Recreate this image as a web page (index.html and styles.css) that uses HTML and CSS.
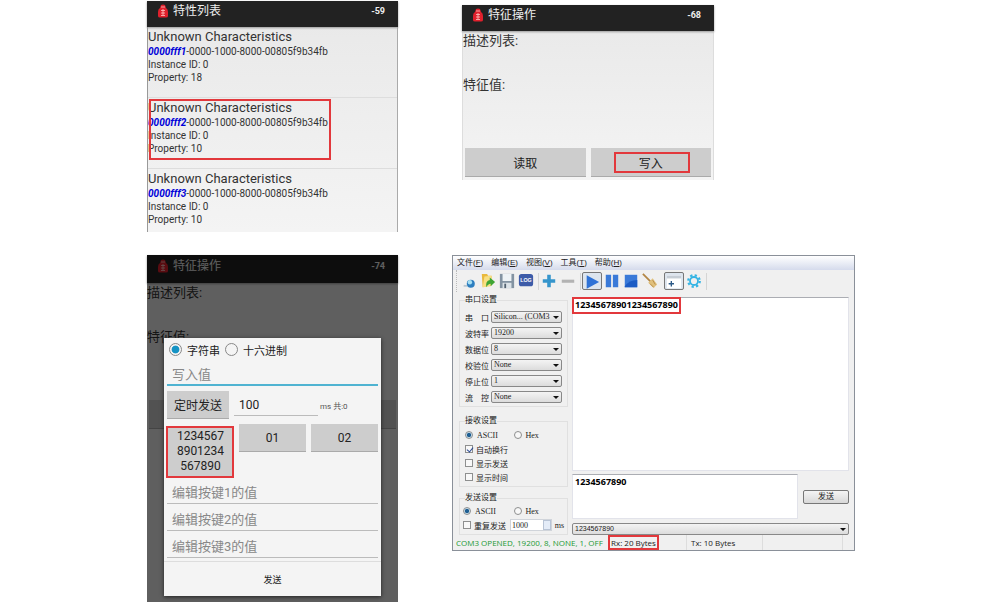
FILE: index.html
```html
<!DOCTYPE html>
<html lang="zh-CN">

<head>
    <meta charset="UTF-8">
    <meta name="viewport" content="width=device-width, initial-scale=1.0">
    <title>特征操作</title>
    <link rel="stylesheet" href="styles.css">
</head>

<body>
    <svg width="0" height="0" class="defs">
        <symbol id="logo" viewBox="0 0 12 14">
            <path d="M4 1Q6 0 8 1L9 4Q11 5 11 8V12Q11 13.500 9 13.500H3Q1 13.500 1 12V8Q1 5 3 4Z" fill="#e0202c" />
            <path d="M4 3H8M4 6.500H8M6 5V11M4 9H8M4 11.500H8" stroke="#ffc5c0" stroke-width="0.800" fill="none" />
        </symbol>
    </svg>

    <div class="page">
        <!-- Characteristics list -->
        <div class="phone">
            <div class="bar">
                <svg class="logo"><use href="#logo" /></svg>
                <span class="bar-title">特性列表</span>
                <span class="rssi">-59</span>
            </div>
            <div class="item">
                <div class="name">Unknown Characteristics</div>
                <div><b class="uuid">0000fff1</b>-0000-1000-8000-00805f9b34fb</div>
                <div>Instance ID: 0</div>
                <div>Property: 18</div>
            </div>
            <div class="item">
                <div class="name">Unknown Characteristics</div>
                <div><b class="uuid">0000fff2</b>-0000-1000-8000-00805f9b34fb</div>
                <div>Instance ID: 0</div>
                <div>Property: 10</div>
                <span class="mark mark-item"></span>
            </div>
            <div class="item">
                <div class="name">Unknown Characteristics</div>
                <div><b class="uuid">0000fff3</b>-0000-1000-8000-00805f9b34fb</div>
                <div>Instance ID: 0</div>
                <div>Property: 10</div>
            </div>
        </div>

        <!-- Read / write -->
        <div class="phone phone-rw">
            <div class="bar">
                <svg class="logo"><use href="#logo" /></svg>
                <span class="bar-title">特征操作</span>
                <span class="rssi">-68</span>
            </div>
            <div class="label">描述列表:</div>
            <div class="label">特征值:</div>
            <div class="actions">
                <button class="btn">读取</button>
                <button class="btn">写入<span class="mark mark-write"></span></button>
            </div>
        </div>

        <!-- Write dialog -->
        <div class="phone phone-dialog">
            <div class="bar">
                <svg class="logo"><use href="#logo" /></svg>
                <span class="bar-title">特征操作</span>
                <span class="rssi">-74</span>
            </div>
            <div class="label">描述列表:</div>
            <div class="label">特征值:</div>
            <div class="actions">
                <button class="btn" aria-label="读取"></button>
                <button class="btn" aria-label="写入"></button>
            </div>
            <div class="shade"></div>
            <div class="dialog">
                <div class="radios">
                    <label><input type="radio" name="fmt" checked>字符串</label>
                    <label><input type="radio" name="fmt">十六进制</label>
                </div>
                <input class="field field-focus" type="text" placeholder="写入值" aria-label="写入值">
                <div class="timer">
                    <button class="btn btn-timer">定时发送</button>
                    <input class="interval" type="text" value="100" aria-label="定时发送">
                    <span class="unit">ms 共:0</span>
                </div>
                <div class="keys">
                    <button class="btn key key-long">1234567<br>8901234<br>567890<span class="mark mark-key"></span></button>
                    <button class="btn key">01</button>
                    <button class="btn key">02</button>
                </div>
                <input class="field" type="text" placeholder="编辑按键1的值" aria-label="编辑按键1的值">
                <input class="field" type="text" placeholder="编辑按键2的值" aria-label="编辑按键2的值">
                <input class="field" type="text" placeholder="编辑按键3的值" aria-label="编辑按键3的值">
                <button class="dialog-send">发送</button>
            </div>
        </div>

        <!-- Serial port tool -->
        <div class="serial">
            <div class="menu">
                <span>文件(<u>F</u>)</span>
                <span>编辑(<u>E</u>)</span>
                <span>视图(<u>V</u>)</span>
                <span>工具(<u>T</u>)</span>
                <span>帮助(<u>H</u>)</span>
            </div>
            <div class="toolbar">
                <button class="tool" aria-label="connect"><svg viewBox="0 0 18 18"><circle cx="11" cy="12" r="4.500" fill="#2e7fc0" /><circle cx="10" cy="10.500" r="2.500" fill="#a9e0f2" /><path d="M3 14Q5 15 7 14" stroke="#b8c6d0" stroke-width="2" fill="none" /></svg></button>
                <button class="tool" aria-label="open"><svg viewBox="0 0 18 18"><path d="M2 1H8L9 3H13V14L3 16Z" fill="#e9b93c" /><path d="M5 4L13 3L12 15L3 16Z" fill="#f8df82" /><path d="M7 16Q6 9 11 8V5L17 10L12 15V12Q9 12 7 16Z" fill="#3fa535" /></svg></button>
                <button class="tool" aria-label="save"><svg viewBox="0 0 18 18"><path d="M1 1H17V17H1Z" fill="#8393a2" /><path d="M4 1H14V9H4Z" fill="#eef3f6" /><path d="M4 11H14V17H4Z" fill="#dce3e8" /><path d="M6 12H8V17H6Z" fill="#526170" /></svg></button>
                <button class="tool" aria-label="log"><svg viewBox="0 0 18 18"><rect x="1" y="1" width="16" height="14" rx="3" fill="#3d5ba8" /><text x="9" y="10" class="log">LOG</text></svg></button>
                <i class="sep"></i>
                <button class="tool" aria-label="add"><svg viewBox="0 0 18 18"><path d="M7 2H11V7H16V11H11V16H7V11H2V7H7Z" fill="#3595cc" /></svg></button>
                <button class="tool" aria-label="remove"><svg viewBox="0 0 18 18"><path d="M2 7.500H16V11H2Z" fill="#b3b3b3" /></svg></button>
                <i class="sep"></i>
                <button class="tool pressed" aria-label="start"><svg viewBox="0 0 18 18"><path d="M3 1.500L17 9L3 16.500Z" fill="#2f72d6" /></svg></button>
                <button class="tool" aria-label="pause"><svg viewBox="0 0 18 18"><path d="M2 2H8V16H2ZM10 2H16V16H10Z" fill="#3a7ad8" /></svg></button>
                <button class="tool" aria-label="stop"><svg viewBox="0 0 18 18"><path d="M2 2H16V16H2Z" fill="#3a7ad8" /><path d="M2 15Q7 8 16 8V16H2Z" fill="#1c5cc4" /></svg></button>
                <button class="tool" aria-label="clear"><svg viewBox="0 0 18 18"><path d="M1 1L10 10" stroke="#b28543" stroke-width="2" /><path d="M7 11L12 6L17 13L13 17Z" fill="#e0c07c" /><path d="M9 12L13 16M12 8L15 13" stroke="#b48a48" /></svg></button>
                <i class="sep sep-none"></i>
                <button class="tool pressed" aria-label="panel"><svg viewBox="0 0 18 18"><path d="M1 2H17V16H1Z" fill="#fff" /><path d="M1 2H17V5H1Z" fill="#c6cdd5" /><path d="M3 11H9M6 8V14" stroke="#2d5b88" stroke-width="1.500" /></svg></button>
                <button class="tool" aria-label="settings"><svg viewBox="0 0 18 18"><circle cx="9" cy="9" r="6.500" fill="none" stroke="#35b4e4" stroke-width="2.500" stroke-dasharray="2.550" /><circle cx="9" cy="9" r="4.500" fill="none" stroke="#35b4e4" stroke-width="2" /></svg></button>
                <i class="sep"></i>
            </div>

            <div class="work">
                <div class="side">
                    <fieldset class="group group-port">
                        <legend>串口设置</legend>
                        <div class="row"><label for="port">串&emsp;口</label><span class="combo"><select id="port"><option>Silicon... (COM3</option></select></span></div>
                        <div class="row"><label for="baud">波特率</label><span class="combo"><select id="baud"><option>19200</option></select></span></div>
                        <div class="row"><label for="data">数据位</label><span class="combo"><select id="data"><option>8</option></select></span></div>
                        <div class="row"><label for="parity">校验位</label><span class="combo"><select id="parity"><option>None</option></select></span></div>
                        <div class="row"><label for="stop">停止位</label><span class="combo"><select id="stop"><option>1</option></select></span></div>
                        <div class="row"><label for="flow">流&emsp;控</label><span class="combo"><select id="flow"><option>None</option></select></span></div>
                    </fieldset>
                    <fieldset class="group group-recv">
                        <legend>接收设置</legend>
                        <div class="opts">
                            <label><input type="radio" name="recv" checked>ASCII</label>
                            <label><input type="radio" name="recv">Hex</label>
                        </div>
                        <label class="check"><input type="checkbox" checked>自动换行</label>
                        <label class="check"><input type="checkbox">显示发送</label>
                        <label class="check"><input type="checkbox">显示时间</label>
                    </fieldset>
                    <fieldset class="group group-send">
                        <legend>发送设置</legend>
                        <div class="opts">
                            <label><input type="radio" name="send" checked>ASCII</label>
                            <label><input type="radio" name="send">Hex</label>
                        </div>
                        <div class="repeat">
                            <label class="check"><input type="checkbox">重复发送</label>
                            <span class="spin"><input type="text" value="1000" aria-label="ms"><i></i></span>
                            <span class="ms">ms</span>
                        </div>
                    </fieldset>
                </div>

                <div class="main">
                    <div class="recv">
                        <textarea class="console" aria-label="接收" readonly>12345678901234567890</textarea>
                        <span class="mark mark-recv"></span>
                    </div>
                    <div class="send">
                        <textarea class="console" aria-label="发送">1234567890</textarea>
                        <button class="send-btn">发送</button>
                    </div>
                    <span class="combo combo-history"><select aria-label="历史"><option>1234567890</option></select></span>
                </div>
            </div>

            <div class="status">
                <span class="opened">COM3 OPENED, 19200, 8, NONE, 1, OFF</span>
                <span class="rx">Rx: 20 Bytes<span class="mark mark-rx"></span></span>
                <span class="tx">Tx: 10 Bytes</span>
                <span class="rest"></span>
            </div>
        </div>
    </div>
</body>

</html>
```
FILE: styles.css
```css
* {
    box-sizing: border-box;
}

body {
    margin: 0;
    background-color: white;
    font-family: Roboto, "Noto Sans CJK SC", sans-serif;
    color: #333;
}

button, input, select, textarea {
    font-family: inherit;
    color: inherit;
    margin: 0;
    padding: 0;
    border: 0;
    border-radius: 0;
    outline: none;
}

.defs {
    position: absolute;
}

.page {
    display: grid;
    grid-template-columns: 251fr 403fr;
    column-gap: 54px;
    row-gap: 23px;
    align-items: start;
    padding: 1px 145px 0 147px;
}

/* Red frames drawn over the controls */
.mark {
    position: absolute;
    border: 2px solid #e2383c;
}

/* Phone screens */
.phone {
    position: relative;
    background-image: linear-gradient(#e8e8e8, #f4f4f4);
    border-left: 1px solid #999;
    border-right: 1px solid #aaa;
}

.bar {
    display: flex;
    align-items: center;
    height: 26px;
    margin: 0 -1px;
    padding: 0 13px 6px 10px;
    background-color: #222;
    color: #eee;
    box-shadow: 0 1px 2px #999;
}

.logo {
    width: 12px;
    height: 14px;
    margin-right: 4px;
}

.bar-title {
    flex: 1;
    font-size: 12px;
    line-height: 20px;
}

.rssi {
    font-size: 9px;
    font-weight: bold;
}

.item {
    position: relative;
    padding: 1px 0 13px;
    border-bottom: 1px solid #ddd;
    font-size: 10px;
    line-height: 13px;
}

.item:last-child {
    padding-bottom: 6px;
    border-bottom: 0;
}

.name {
    font-size: 13px;
    line-height: 17px;
}

.uuid {
    color: #0000d8;
    font-style: italic;
}

.mark-item {
    top: 1px;
    left: 1px;
    width: 182px;
    height: 61px;
}

.phone-rw {
    max-width: 252px;
    margin: 4px 0 0 10px;
    border-color: #ddd;
}

.label {
    height: 44px;
    font-size: 13px;
    line-height: 19px;
}

.actions {
    display: flex;
    gap: 5px;
    padding: 29px 2px 3px;
}

.btn {
    position: relative;
    flex: 1;
    height: 29px;
    background-color: #cdcdcd;
    border-bottom: 1px solid #aaa;
    color: #222;
    font-size: 12px;
}

.mark-write {
    top: 4px;
    left: 23px;
    right: 21px;
    height: 21px;
}

/* Write dialog */
.phone-dialog {
    height: 347px;
    background-image: none;
    background-color: #eee;
    border: 0;
}

.phone-dialog .bar {
    height: 28px;
    margin: 0;
}

.shade {
    position: absolute;
    top: 0;
    right: 0;
    bottom: 0;
    left: 0;
    background-color: rgba(0, 0, 0, 0.6);
}

.dialog {
    position: absolute;
    top: 83px;
    left: 17px;
    right: 17px;
    display: flex;
    flex-direction: column;
    padding: 0 3px;
    background-color: #f4f4f4;
    box-shadow: 0 1px 4px #222;
    color: #222;
}

.radios {
    display: flex;
    gap: 5px;
    height: 23px;
    padding-left: 2px;
    font-size: 11px;
}

.radios label {
    display: flex;
    align-items: center;
    gap: 5px;
}

.radios input {
    appearance: none;
    width: 13px;
    height: 13px;
    border: 1px solid #888;
    border-radius: 50%;
}

.radios input:checked {
    background-image: radial-gradient(#1593c4 45%, transparent 55%);
}

.field {
    height: 27px;
    padding: 5px 5px 0;
    background-color: transparent;
    border-bottom: 1px solid #bbb;
    font-size: 13px;
}

.field::placeholder {
    color: #888;
}

.field-focus {
    height: 25px;
    padding-top: 3px;
    border-bottom: 2px solid #4fb3d1;
}

.timer {
    display: flex;
    height: 28px;
    margin: 5px 0;
}

.btn-timer {
    flex: 0 0 62px;
    height: 28px;
}

.interval {
    width: 84px;
    height: 25px;
    margin: 0 2px 0 5px;
    padding-left: 5px;
    padding-top: 3px;
    background-color: transparent;
    border-bottom: 1px solid #bbb;
    font-size: 12px;
}

.unit {
    align-self: center;
    font-size: 8px;
    color: #555;
}

.keys {
    display: flex;
    align-items: flex-start;
    gap: 5px;
    height: 53px;
}

.key {
    height: 28px;
}

.key-long {
    height: 51px;
    margin-top: 2px;
    line-height: 15px;
}

.mark-key {
    top: 0;
    right: 0;
    bottom: -2px;
    left: -1px;
}

.dialog-send {
    height: 35px;
    margin: 3px -3px 0;
    border-top: 1px solid #ddd;
    background-color: transparent;
    font-size: 9px;
}

/* Serial port window */
.serial {
    border: 1px solid #8a9099;
    background-color: #f0f0f0;
    color: #222;
    font-family: "Liberation Sans", "Noto Sans CJK SC", sans-serif;
    font-size: 8px;
}

.menu {
    display: flex;
    gap: 8px;
    height: 14px;
    padding-left: 4px;
    background-image: linear-gradient(#fff, #d5dbec);
    line-height: 14px;
}

.toolbar {
    display: flex;
    align-items: center;
    gap: 1px;
    height: 22px;
    margin-left: 3px;
    padding-left: 3px;
    border-left: 1px dotted #bbb;
}

.tool {
    width: 18px;
    height: 18px;
    padding: 1px;
    background-color: transparent;
}

.tool svg {
    display: block;
    width: 16px;
    height: 16px;
}

.tool.pressed {
    width: 20px;
    height: 18px;
    background-color: #dde5ee;
    border: 1px solid #777;
    border-radius: 2px;
}

.log {
    fill: white;
    font-size: 6px;
    font-weight: bold;
    text-anchor: middle;
}

.sep {
    width: 3px;
    height: 17px;
    border-right: 1px solid #d5d5d5;
}

.sep-none {
    border: 0;
}

.work {
    display: flex;
    gap: 4px;
    padding: 2px 5px 0 6px;
}

.side {
    flex: 0 0 109px;
    min-width: 0;
}

.group {
    min-width: 0;
    margin: 0;
    padding: 0 5px;
    border: 1px solid #e0e0e0;
}

.group legend {
    height: 12px;
    padding: 0;
    line-height: 12px;
}

.group-port {
    height: 113px;
}

.row {
    display: flex;
    align-items: center;
    height: 16px;
}

.row:nth-of-type(1) {
    margin-top: 3px;
}

.row label {
    width: 26px;
    white-space: nowrap;
}

.combo {
    position: relative;
    display: block;
    flex: 1;
    min-width: 0;
    height: 12px;
}

.combo select {
    display: block;
    appearance: none;
    width: 100%;
    height: 100%;
    padding-left: 2px;
    background-image: linear-gradient(#f4f4f4, #dcdcdc);
    border: 1px solid #888;
    border-radius: 2px;
    font-family: "Liberation Serif", serif;
    font-size: 8px;
    line-height: 10px;
}

.combo::after {
    content: "";
    position: absolute;
    top: 5px;
    right: 3px;
    border: 3px solid transparent;
    border-top-color: #111;
    border-bottom: 0;
}

.group-recv {
    height: 72px;
    margin-top: 8px;
}

.opts {
    display: flex;
    height: 14px;
    font-family: "Liberation Serif", serif;
}

.group-recv .opts {
    margin-top: 1px;
}

.opts label {
    display: flex;
    align-items: center;
    gap: 4px;
    width: 51px;
}

.opts input, .check input {
    appearance: none;
    width: 8px;
    height: 8px;
    border: 1px solid #8e8f8f;
    background-color: #f8f8f8;
}

.opts input {
    border-radius: 50%;
}

.opts input:checked {
    background-image: radial-gradient(#1f5f93 40%, #c5dbe8 60%);
}

.check {
    display: flex;
    align-items: center;
    gap: 3px;
    height: 14px;
    white-space: nowrap;
}

.check input {
    position: relative;
}

.check input:checked::after {
    content: "";
    position: absolute;
    top: 0;
    left: 2px;
    width: 3px;
    height: 5px;
    border: solid #2a4a94;
    border-width: 0 1px 1px 0;
    transform: rotate(40deg);
}

.group-send {
    height: 43px;
    margin-top: 5px;
    padding: 0 3px;
}

.group-send legend {
    margin-left: 2px;
}

.repeat {
    display: flex;
    align-items: center;
    height: 14px;
}

.spin {
    display: flex;
    flex: 1;
    min-width: 0;
    height: 12px;
    margin: 0 3px 0 4px;
    background-color: white;
    border: 1px solid #d0d4da;
    font-family: "Liberation Serif", serif;
}

.spin input {
    flex: 1;
    width: 0;
    min-width: 0;
    padding-left: 1px;
    font-size: 8px;
    background-color: transparent;
}

.spin i {
    width: 8px;
    border: 1px solid #b8c4d6;
    background-image: linear-gradient(#e4ecf8 45%, #7f93b5 45%, #7f93b5 55%, #e4ecf8 55%);
}

.ms {
    font-family: "Liberation Serif", serif;
}

.main {
    flex: 1;
    min-width: 0;
    padding-top: 3px;
}

.recv {
    position: relative;
    height: 174px;
}

.console {
    display: block;
    width: 100%;
    height: 100%;
    padding: 1px 2px;
    resize: none;
    background-color: white;
    border: 1px solid #e2e3ea;
    border-top-color: #abadb3;
    color: #000;
    font-family: "Noto Sans", sans-serif;
    font-size: 9px;
    font-weight: bold;
    line-height: 12px;
}

.mark-recv {
    top: 0;
    left: 0;
    width: 109px;
    height: 17px;
}

.send {
    display: flex;
    align-items: center;
    gap: 5px;
    height: 45px;
    margin-top: 3px;
}

.send .console {
    flex: 1;
}

.send-btn {
    width: 46px;
    height: 14px;
    background-image: linear-gradient(#f4f4f4, #d8d8d8);
    border: 1px solid #777;
    border-radius: 2px;
    font-size: 8px;
    line-height: 12px;
}

.combo-history {
    margin-top: 4px;
}

.combo-history select {
    font-family: "Liberation Sans", sans-serif;
    font-size: 7px;
}

.status {
    display: flex;
    height: 15px;
    padding-left: 3px;
    font-family: "Open Sans", sans-serif;
    line-height: 15px;
    white-space: nowrap;
}

.opened {
    width: 155px;
    color: #239a35;
}

.rx {
    position: relative;
    width: 75px;
}

.tx {
    width: 77px;
    padding-left: 4px;
    border-left: 1px solid #ddd;
    border-right: 1px solid #ddd;
}

.rest {
    width: 80px;
    border-right: 1px solid #ddd;
}

.mark-rx {
    top: 0;
    left: -3px;
    width: 51px;
    height: 15px;
}
```
